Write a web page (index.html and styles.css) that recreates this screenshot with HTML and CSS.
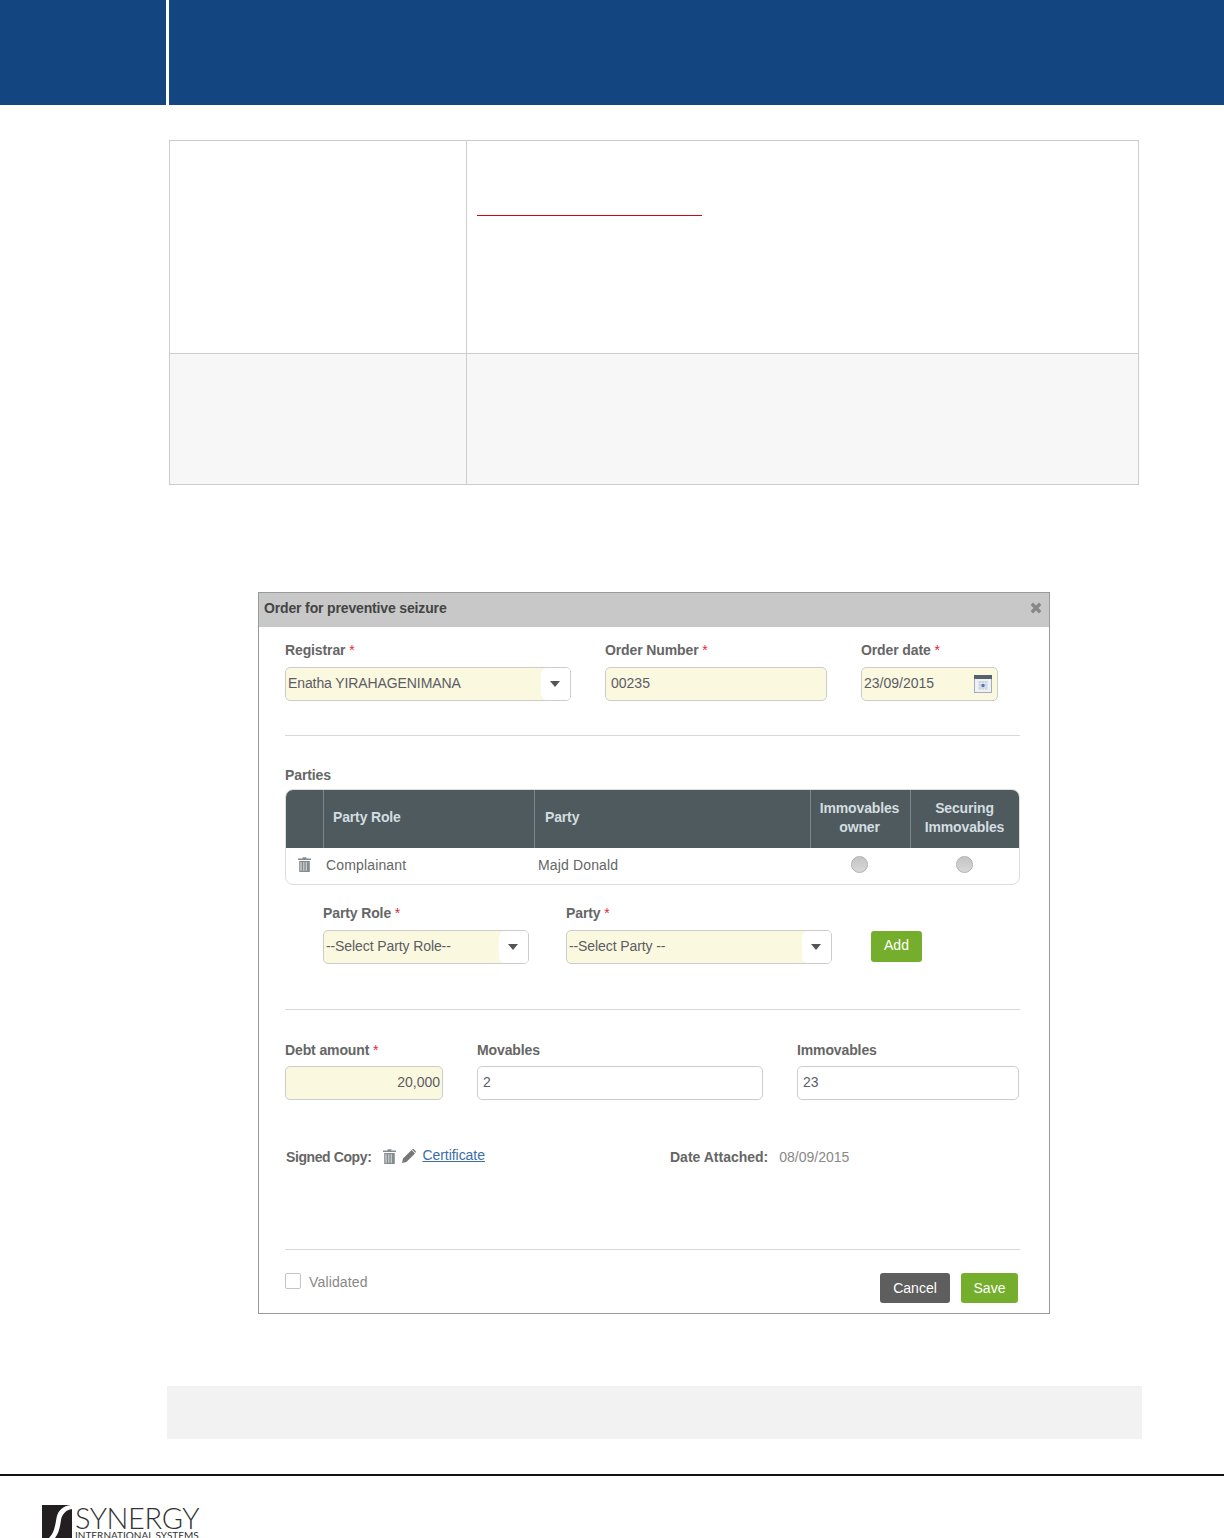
FILE: index.html
```html
<!DOCTYPE html>
<html lang="en">
<head>
<meta charset="utf-8">
<title>Order for preventive seizure</title>
<link rel="stylesheet" href="styles.css">
</head>
<body>
<header class="page-head">
  <div class="head-side"></div>
  <div class="head-main"></div>
</header>

<section class="info-table">
  <div class="cell cell-a row-1"></div>
  <div class="cell cell-b row-1"><div class="red-rule"></div></div>
  <div class="cell cell-a row-2 tint"></div>
  <div class="cell cell-b row-2 tint"></div>
</section>

<section class="dialog">
  <div class="dialog-title">
    <span>Order for preventive seizure</span>
    <svg class="close-icon" viewBox="0 0 12 12"><path d="M3 .6 6 3.6 9 .6 11.4 3 8.4 6 11.4 9 9 11.4 6 8.4 3 11.4 .6 9 3.6 6 .6 3Z"/></svg>
  </div>
  <div class="dialog-body">
    <div class="form-row top-row">
      <div class="field w-286">
        <div class="label">Registrar <i>*</i></div>
        <div class="input select req"><span class="val">Enatha YIRAHAGENIMANA</span><span class="arrow"><b></b></span></div>
      </div>
      <div class="field w-222">
        <div class="label">Order Number <i>*</i></div>
        <div class="input req pad"><span class="val">00235</span></div>
      </div>
      <div class="field w-137">
        <div class="label">Order date <i>*</i></div>
        <div class="input req date"><span class="val">23/09/2015</span>
          <svg class="cal-icon" viewBox="0 0 18 18"><rect x=".5" y=".5" width="17" height="17" fill="#eef1f5" stroke="#a4acb5"/><rect x="0" y="0" width="18" height="4" fill="#56616c"/><path d="M4 7h10M4 10h10M4 13h10M6 6v9M9 6v9M12 6v9" stroke="#c5cdd8" stroke-width="1" fill="none"/><rect x="7.5" y="9" width="3" height="3" fill="#4a78b8"/></svg>
        </div>
      </div>
    </div>
    <hr class="rule rule-1">
    <div class="label parties-label">Parties</div>
    <div class="parties">
      <div class="p-row p-head">
        <div class="p-c c-icon"></div>
        <div class="p-c c-role">Party Role</div>
        <div class="p-c c-party">Party</div>
        <div class="p-c c-own">Immovables<br>owner</div>
        <div class="p-c c-sec">Securing<br>Immovables</div>
      </div>
      <div class="p-row p-data">
        <div class="p-c c-icon">
          <svg class="trash" viewBox="0 0 13 15"><path d="M4.6 1.4V.3h3.8v1.1H13v1.6H0V1.4Z"/><path d="M1.2 4h10.6v11H1.2Zm1.3 1.2v8.6h1.3V5.2Zm2.6 0v8.6h1.3V5.2Zm2.6 0v8.6h1.3V5.2Z" fill-rule="evenodd"/><path d="M2.5 5.2h8v8.6h-8Z" opacity=".45"/></svg>
        </div>
        <div class="p-c c-role">Complainant</div>
        <div class="p-c c-party">Majd Donald</div>
        <div class="p-c c-own"><span class="radio"></span></div>
        <div class="p-c c-sec"><span class="radio"></span></div>
      </div>
    </div>
    <div class="form-row add-row">
      <div class="field w-206">
        <div class="label">Party Role <i>*</i></div>
        <div class="input select req"><span class="val">--Select Party Role--</span><span class="arrow"><b></b></span></div>
      </div>
      <div class="field w-266">
        <div class="label">Party <i>*</i></div>
        <div class="input select req"><span class="val">--Select Party --</span><span class="arrow"><b></b></span></div>
      </div>
      <button class="btn btn-add" type="button">Add</button>
    </div>
    <hr class="rule rule-2">
    <div class="form-row amount-row">
      <div class="field w-158">
        <div class="label">Debt amount <i>*</i></div>
        <div class="input req amount"><span class="val">20,000</span></div>
      </div>
      <div class="field w-286">
        <div class="label">Movables</div>
        <div class="input pad"><span class="val">2</span></div>
      </div>
      <div class="field w-222b">
        <div class="label">Immovables</div>
        <div class="input pad"><span class="val">23</span></div>
      </div>
    </div>
    <div class="signed-row">
      <div class="signed-left">
        <span class="label signed-label">Signed Copy:</span>
        <svg class="trash trash-2" viewBox="0 0 13 15"><path d="M4.6 1.4V.3h3.8v1.1H13v1.6H0V1.4Z"/><path d="M1.2 4h10.6v11H1.2Zm1.3 1.2v8.6h1.3V5.2Zm2.6 0v8.6h1.3V5.2Zm2.6 0v8.6h1.3V5.2Z" fill-rule="evenodd"/><path d="M2.5 5.2h8v8.6h-8Z" opacity=".45"/></svg>
        <svg class="pencil" viewBox="0 0 14 14"><path d="M0 14 1 9.6 9.6 1l3.4 3.4L4.4 13ZM10.4.2c.5-.4 1-.3 1.4.1l1.9 1.9c.4.4.4.9 0 1.3l-.3.3L10 .5Z"/></svg>
        <a class="cert" href="#">Certificate</a>
      </div>
      <div class="signed-right">
        <span class="label date-label">Date Attached:</span>
        <span class="date-val">08/09/2015</span>
      </div>
    </div>
    <hr class="rule rule-3">
    <div class="dialog-foot">
      <label class="check"><span class="box"></span><span class="check-text">Validated</span></label>
      <div class="actions">
        <button class="btn btn-cancel" type="button">Cancel</button>
        <button class="btn btn-save" type="button">Save</button>
      </div>
    </div>
  </div>
</section>

<div class="note-band"></div>

<footer class="page-foot">
  <div class="logo">
    <svg class="logo-mark" viewBox="0 0 30 33"><path fill="#231f20" d="M0 0H29C21 1 16 5 14.500 13 13 22 12 28 7 33H0Z"/><path fill="#231f20" d="M30 4V33H13C17 28 18 22 19 15 20 9 24 5 30 4Z"/></svg>
    <div class="logo-text">
      <div class="logo-big">SYNERGY</div>
      <div class="logo-small">INTERNATIONAL SYSTEMS</div>
    </div>
  </div>
</footer>
</body>
</html>
```
FILE: styles.css
```css
* { box-sizing: border-box; }
html, body { margin: 0; padding: 0; }
body {
  width: 1224px;
  height: 1538px;
  overflow: hidden;
  background: #fff;
  font-family: "Liberation Sans", Arial, sans-serif;
  font-size: 14px;
  color: #666;
}

.page-head { display: flex; height: 105px; gap: 3px; }
.head-side { width: 166px; background: #134681; }
.head-main { flex: 1; background: #134681; }

.info-table {
  display: grid;
  grid-template-columns: 298px 672px;
  grid-template-rows: 214px 131px;
  width: 970px;
  margin: 35px 0 0 169px;
}
.cell { border: 1px solid #ccc; }
.cell-b { border-left: 0; padding: 74px 0 0 10px; }
.row-2 { border-top: 0; }
.tint { background: #f7f7f7; }
.red-rule { width: 225px; height: 1px; background: #cc0a14; }

.dialog {
  width: 792px;
  height: 722px;
  margin: 107px 0 0 258px;
  border: 1px solid #999;
  background: #fff;
}
.dialog-title {
  display: flex;
  align-items: center;
  justify-content: space-between;
  height: 34px;
  padding: 0 7px 4px 5px;
  background: #c8c8c8;
  font-weight: bold;
  color: #444;
  letter-spacing: -.15px;
}
.close-icon { width: 12px; height: 12px; fill: #888; }
.dialog-body { padding: 0 29px 0 26px; }

.form-row { display: flex; }
.label {
  font-weight: bold;
  line-height: 16px;
  color: #666;
  letter-spacing: -.12px;
}
.label i { font-style: normal; font-weight: normal; color: #e0283c; }
.field .label { margin-bottom: 9px; }
.top-row { margin-top: 15px; gap: 34px; }
.w-286 { width: 286px; }
.w-222 { width: 222px; }
.w-137 { width: 137px; }
.w-206 { width: 206px; }
.w-266 { width: 266px; }
.w-158 { width: 158px; }
.w-222b { width: 222px; }

.input {
  display: flex;
  align-items: center;
  height: 34px;
  border: 1px solid #ccc;
  border-radius: 5px;
  background: #fff;
  overflow: hidden;
  color: #5c5c66;
}
.val { white-space: nowrap; position: relative; top: -1px; }
.req { background: #faf8df; }
.pad { padding-left: 5px; }
.select { padding-left: 3px; justify-content: space-between; }
.select .val { letter-spacing: -.1px; }
.select.req .val { margin-left: -1px; }
.arrow {
  display: flex;
  align-items: center;
  justify-content: center;
  width: 29px;
  height: 100%;
  padding-right: 2px;
  background: #fff;
  border-radius: 6px 0 0 6px;
}
.arrow b {
  width: 0;
  height: 0;
  border: 5.5px solid transparent;
  border-top: 6px solid #555;
  border-bottom: 0;
}
.date { padding: 0 4px 0 2px; justify-content: space-between; }
.cal-icon { width: 18px; height: 18px; margin-right: 1px; }
.amount { justify-content: flex-end; padding-right: 2px; }

.rule { height: 1px; margin: 0; border: 0; background: #d8d8d8; }
.rule-1 { margin-top: 34px; }
.parties-label { margin-top: 31px; }
.parties {
  width: 735px;
  height: 96px;
  margin-top: 6px;
  border: 1px solid #ddd;
  border-radius: 8px;
  overflow: hidden;
}
.p-row { display: flex; }
.p-head {
  height: 58px;
  background: #4e5a5e;
  color: #d3dde0;
  font-weight: bold;
  line-height: 19px;
  letter-spacing: -.15px;
}
.p-head .p-c { padding-bottom: 3px; }
.p-head .c-own { padding-right: 2px; }
.p-head .c-sec { padding-right: 1px; }
.p-data { height: 36px; color: #666; letter-spacing: .15px; }
.p-data .p-c { padding-bottom: 3px; }
.p-c { display: flex; align-items: center; }
.c-icon { width: 37px; justify-content: center; }
.c-role { width: 211px; }
.c-party { width: 276px; }
.c-own { width: 100px; justify-content: center; text-align: center; }
.c-sec { width: 109px; justify-content: center; text-align: center; }
.p-head .p-c + .p-c { border-left: 1px solid #7d8689; }
.p-head .c-role { padding-left: 9px; }
.p-head .c-party { padding-left: 10px; }
.p-data .c-role { padding-left: 3px; }
.p-data .c-party { padding-left: 4px; }
.p-data .c-own { padding-right: 2px; }
.p-data .c-sec { padding-right: 1px; }
.trash { width: 13px; height: 15px; fill: #858b8e; }
.radio {
  width: 17px;
  height: 17px;
  border: 1px solid #b0b0b0;
  border-radius: 50%;
  background: linear-gradient(#c4c4c4, #d8d8d8);
}

.add-row { margin-top: 20px; margin-left: 38px; gap: 37px; align-items: flex-start; }
.btn {
  border: 0;
  padding: 0;
  border-radius: 3px;
  color: #fff;
  font-family: inherit;
  font-size: 14px;
}
.btn-add {
  width: 51px;
  height: 31px;
  margin: 26px 0 0 2px;
  padding-bottom: 3px;
  background: #75ae2c;
}
.rule-2 { margin-top: 45px; }
.amount-row { margin-top: 32px; gap: 34px; }
.amount-row .field .label { margin-bottom: 8px; }

.signed-row { display: flex; align-items: center; height: 16px; margin-top: 49px; }
.signed-left { display: flex; align-items: center; width: 385px; padding-left: 1px; }
.signed-label { letter-spacing: -.4px; }
.trash-2 { margin-left: 12px; margin-top: -2px; }
.pencil { width: 14px; height: 14px; margin-left: 6px; margin-top: -2px; fill: #777; }
.cert { margin-left: 6px; color: #3b6ea8; text-decoration: underline; position: relative; top: -2px; letter-spacing: -.05px; }
.signed-right { display: flex; gap: 11px; }
.date-label { letter-spacing: 0; }
.date-val { color: #888; line-height: 16px; }

.rule-3 { margin-top: 84px; }
.dialog-foot { display: flex; justify-content: space-between; margin-top: 23px; padding-right: 2px; }
.check { display: flex; align-items: center; gap: 8px; height: 16px; color: #888; }
.check-text { margin-top: 2px; letter-spacing: .15px; }
.box { width: 16px; height: 16px; border: 1px solid #c4c4c4; border-radius: 2px; }
.actions { display: flex; gap: 11px; }
.btn-cancel { width: 70px; height: 30px; background: #5e5e5e; }
.btn-save { width: 57px; height: 30px; background: #75ae2c; }

.note-band {
  width: 975px;
  height: 53px;
  margin: 72px 0 0 167px;
  background: #f2f2f2;
}

.page-foot { margin-top: 35px; border-top: 2px solid #111; }
.logo { display: flex; align-items: flex-start; gap: 4px; padding: 29px 0 0 42px; }
.logo-mark { width: 30px; height: 33px; flex: none; }
.logo-text { color: #333; margin-left: -1px; }
.logo-big {
  font-family: "Lato", "Liberation Sans", sans-serif;
  font-weight: 300;
  font-size: 29px;
  line-height: 25px;
  letter-spacing: -.4px;
}
.logo-small {
  font-family: "Lato", "Liberation Sans", sans-serif;
  font-size: 10px;
  line-height: 10px;
}
```
